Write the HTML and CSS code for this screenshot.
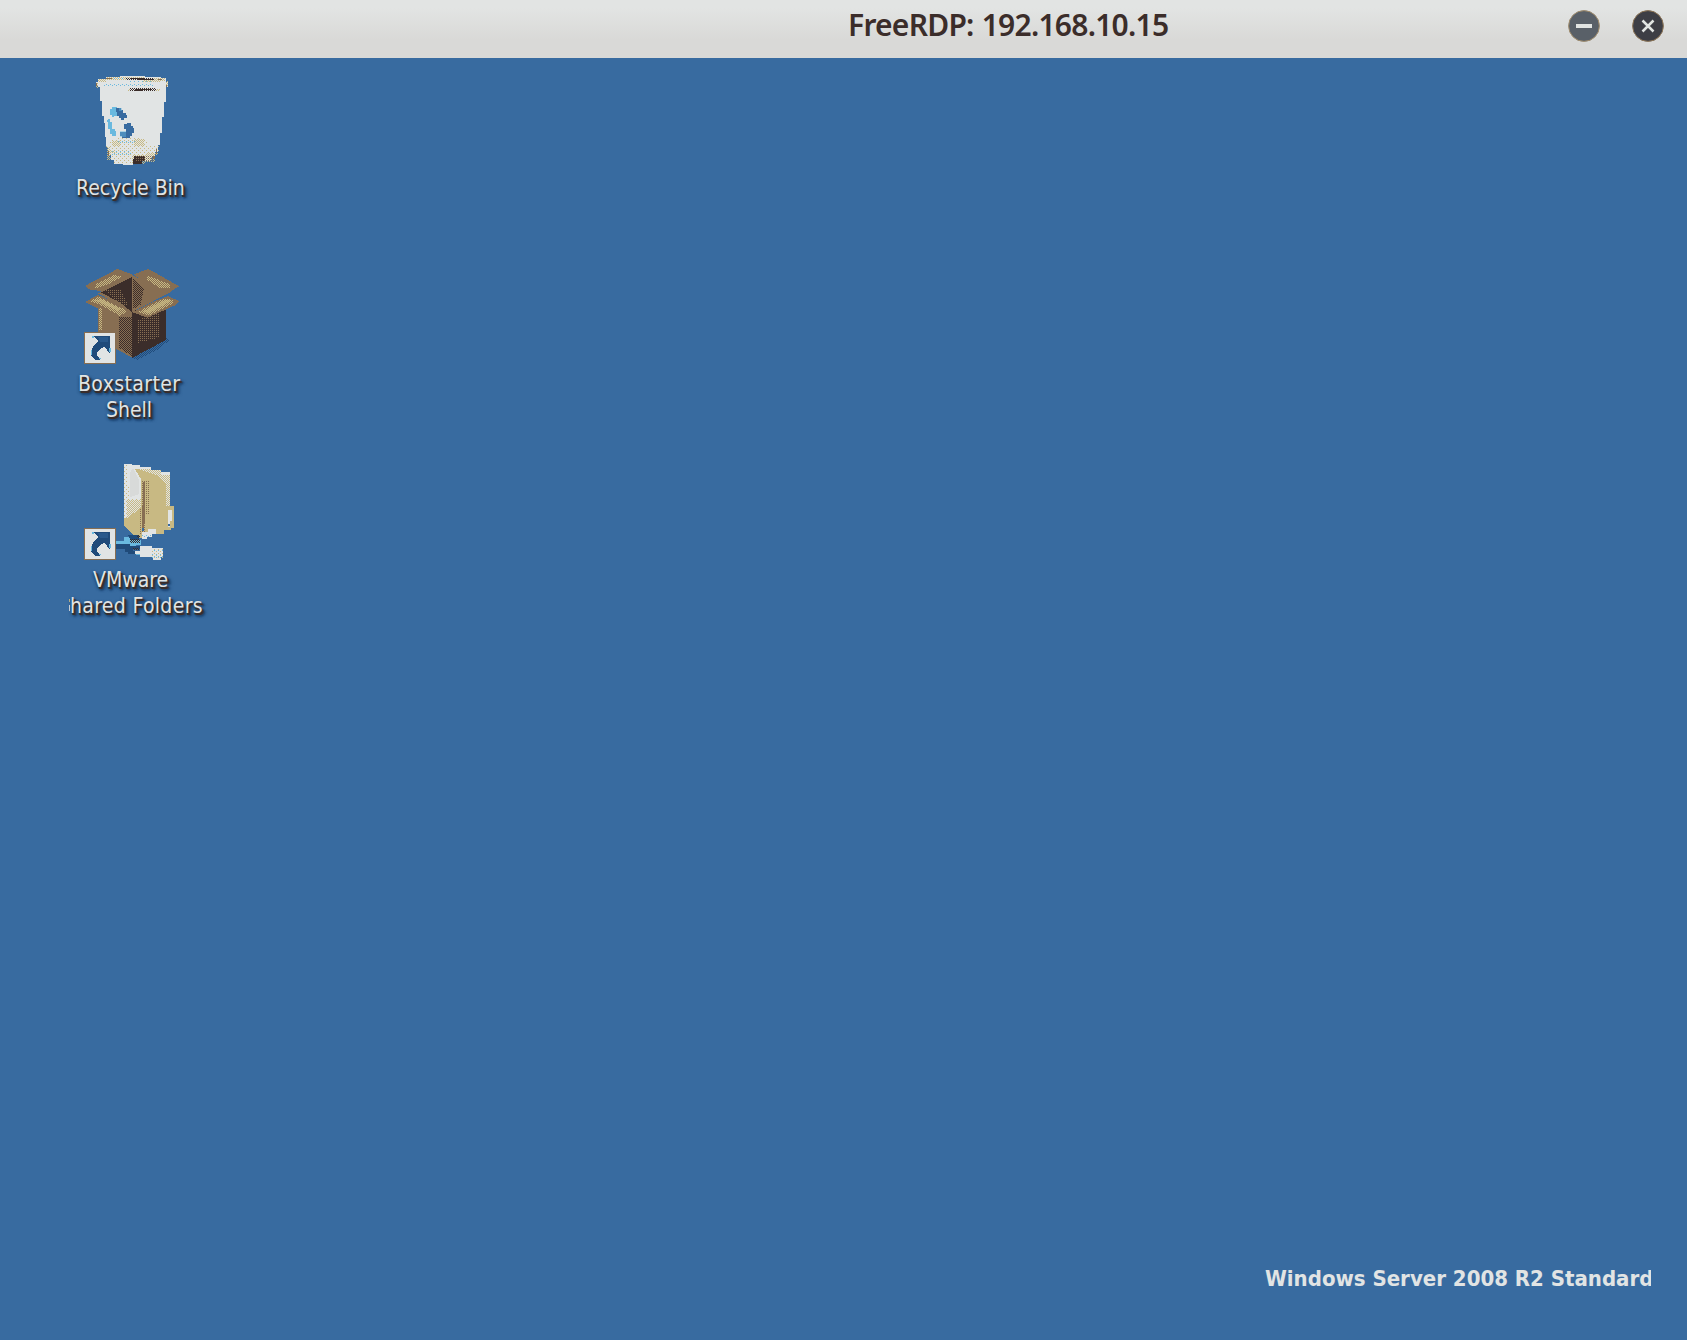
FILE: index.html
```html
<!DOCTYPE html>
<html lang="en">
<head>
<meta charset="utf-8">
<title>FreeRDP: 192.168.10.15</title>
<link rel="stylesheet" href="styles.css">
</head>
<body>
<header class="titlebar">
  <h1 class="title">FreeRDP: 192.168.10.15</h1>
  <div class="controls">
    <svg class="control" viewBox="0 0 32 32"><circle cx="16" cy="16" r="15.4" fill="#596068" stroke="#a18d6d"/><path d="M8 16h16" stroke="#e1e4e2" stroke-width="4"/></svg>
    <svg class="control" viewBox="0 0 32 32"><circle cx="16" cy="16" r="15.4" fill="#3d3e45" stroke="#8d7556"/><path d="M10.5 10.5l11 11m0-11l-11 11" stroke="#e1e4e2" stroke-width="2.5"/></svg>
  </div>
</header>
<main class="desktop">
  <section class="icons">
    <div class="item">
      <svg class="picture" viewBox="0 0 480 336" shape-rendering="crispEdges">
        <defs>
          <pattern id="tan" width="12" height="12" patternUnits="userSpaceOnUse"><path d="M0 0h3v3h-3zM6 6h3v3h-3z" fill="#c8b983"/></pattern>
          <pattern id="brown" width="6" height="6" patternUnits="userSpaceOnUse"><path d="M0 0h3v3h-3z" fill="#876e52"/></pattern>
          <pattern id="dark" width="6" height="6" patternUnits="userSpaceOnUse"><path d="M0 0h3v3h-3zM3 3h3v3h-3z" fill="#3b2d2a"/></pattern>
          <pattern id="gold" width="6" height="6" patternUnits="userSpaceOnUse"><path d="M0 0h3v3h-3zM3 3h3v3h-3z" fill="#c8b983"/></pattern>
          <pattern id="cyan" width="12" height="9" patternUnits="userSpaceOnUse"><path d="M0 0h3v3h-3zM6 6h3v3h-3z" fill="#69b9df"/></pattern>
          <pattern id="blue" width="6" height="6" patternUnits="userSpaceOnUse"><path d="M0 0h3v3h-3zM3 3h3v3h-3z" fill="#204b7a"/></pattern>
          <pattern id="white" width="6" height="6" patternUnits="userSpaceOnUse"><path d="M0 0h3v3h-3zM3 3h3v3h-3z" fill="#e1e4e4"/></pattern>
          <g id="shortcut">
            <path d="M73.5 218.5h93v91h-93z" fill="#e1e4e4" stroke="#876e52" stroke-width="3"/>
            <path d="M99 228h51v51h-3l-6-9-9-9-9 3-9 9-3 9 3 9 6 6v3h-12l-9-6-6-9v-9l3-9 9-15 9-9-6-9-9-3z" fill="#204b7a"/>
            <path d="M114 231h30v15h-24z" fill="#386ba0" opacity=".45"/>
            <path d="M96 228h6v6h-6zM93 270h3v15h-3zM147 264h6v12h-6zM117 294h6v3h-6z" fill="#69b9df"/>
          </g>
        </defs>
        <path d="M108 54h6v-9h24v-6h42v-3h75v3h48v3h15v12h6v15h-6v45h-6v45h-6v48h-6v36h-6v21h-9v15h-12v12h-30v9h-24v3h-30v-3h-27v-12h-9v-15h-9v-24h-6v-30h-3v-42h-3v-21h-6v-45h-6v-42h-6z" fill="#e1e4e4"/>
        <path d="M114 45h24v-6h114v3h51v12h-54v-6h-111v6h-24z" fill="url(#gold)"/>
        <path d="M108 57h6v15h-6zM318 51h6v18h-6zM303 42h12v9h-12z" fill="url(#gold)"/>
        <path d="M108 57h3v9h-3zM318 63h3v6h-3zM138 42h18v3h-18zM294 45h12v3h-12z" fill="#876e52"/>
        <path d="M162 39h54v6h-54zM132 60h150v9h-150zM210 48h72v6h-72z" fill="url(#cyan)"/>
        <path d="M213 42h42v3h24v3h-48v-3h-18zM225 75h48v3h-24v3h-24z" fill="#3b2d2a"/>
        <path d="M204 75h96v6h-96z" fill="url(#gold)"/><path d="M198 42h84v6h-84zM210 72h78v9h-78z" fill="url(#dark)"/>
        <path d="M156 129h15v3h6v9h-6v15h-9v3h-6v-6h-6v-18h6zM144 165h6v9h6v21h9v6h3v15h-12v-6h-6v-15h-6v-21h-3v-6h3z" fill="#69b9df"/>
        <path d="M168 132h15v6h6v9h9v6h3v9h-9v6h-9v-6h-6v-6h-6v-12h-3zM201 177h12v9h6v6h3v15h-6v9h-6v6h-24v-6h-6v-12h18v-9h-6v-15h9z" fill="#386ba0"/>
        <path d="M177 132h9v9h-9zM180 201h18v18h-18z" fill="#69b9df" opacity=".45"/>
        <path d="M168 222h75v6h18v18h36v24h-12v18h-39v12h-84v-15h-15v-27h-9v-15h12v-15h18z" fill="url(#tan)"/>
        <path d="M156 231h24v15h-24zM222 225h30v21h-30zM141 249h9v12h15v6h-15v21h-9zM216 273h45v-6h33v6h-9v21h-30v6h-39z" fill="url(#gold)"/>
        <path d="M174 228h51v12h-51zM153 261h63v12h-63z" fill="url(#cyan)"/>
        <path d="M222 276h33v15h-9v9h-27v-15h3z" fill="#3b2d2a"/><path d="M228 273h54v18h-54z" fill="url(#brown)"/><path d="M288 255h3v15h-3zM144 261h3v15h-3zM279 276h6v9h-6z" fill="#876e52"/>
      </svg>
      <p class="label"><span class="line recycle">Recycle Bin</span></p>
    </div>
    <div class="item">
      <svg class="picture" viewBox="0 0 480 336" shape-rendering="crispEdges">
        <path d="M216 294l45-24 60-38 6 9-27 24-66 34z" fill="url(#blue)"/>
        <path d="M114 140h102v153l-48-27-54-50z" fill="#876e52"/>
        <path d="M216 150l102-3v93l-102 54z" fill="#3b2d2a"/>
        <path d="M114 100L216 45l114 52-114 60z" fill="#876e52"/>
        <path d="M123 98L216 45v111l-40-31z" fill="#3b2d2a"/>
        <path d="M218 50l34 36-10 48-24 15z" fill="url(#dark)"/>
        <path d="M76 77L157 35l15-8 43 15v9l-86 43-43-6z" fill="#876e52"/>
        <path d="M221 43l43-16 18 9 75 43-26 16-48-4z" fill="#876e52"/>
        <path d="M74 126l41-21 82 36 12 15-24 16h-15z" fill="#876e52"/>
        <path d="M217 157l61-31 46-18 33 15-12 13-82 37z" fill="#876e52"/>
        <path d="M107 72l55-27 26 5-48 25-34 10zM264 47l66 26v12h-28l-42-26zM90 124l24-14 83 40v9l-19 8-53-30zM235 155l75-39 30 4v11l-75 36z" fill="url(#gold)"/>
        <path d="M104 121l20-4 57 29-6 7-56-26zM249 154l68-35 18 3-70 38z" fill="#c8b983" opacity=".65"/>
        <path d="M117 145h9v66h-9z" fill="url(#gold)"/>
        <path d="M176 170h39v118l-39-25z" fill="url(#dark)"/>
        <path d="M234 179l66-24v78l-66 15z" fill="url(#brown)"/>
        <path d="M282 93h21v15h-21zM135 88h48l21 48h-27z" fill="url(#brown)"/>
        <use href="#shortcut"/>
      </svg>
      <p class="label"><span class="line box">Boxstarter</span><span class="line shell">Shell</span></p>
    </div>
    <div class="item">
      <svg class="picture" viewBox="0 0 480 336" shape-rendering="crispEdges">
        <g transform="translate(0 -3)">
          <path d="M192 27h24v6h24v6h33v6h30v6h27v102h12v66h-9v6h-21v12h-48l-15 12h-18l-39-36z" fill="#c8b983"/>
          <path d="M192 27h24l27 45v87l-42 30h-9z" fill="#e1e4e4"/>
          <path d="M210 54l9-15 18 36v42l-27 9z" fill="#d8dad9"/>
          <path d="M216 33h24v6h33v6h30v6h27v102h-12V90l-24-27-51-18z" fill="url(#white)"/>
          <path d="M216 30h24v6h33v6h-57zM303 51h27v9h-27z" fill="#e1e4e4"/>
          <path d="M192 27h9v69h9v36h33v30l-42 33h-9z" fill="url(#tan)"/>
          <path d="M201 135h42v24l-42 30z" fill="url(#gold)"/>
          <path d="M249 81h6v105l-3 36h-6z" fill="#876e52"/><path d="M246 78h21v102h-12v60h-15v-78h6z" fill="url(#brown)"/>
          <path d="M324 165h12v33h-6v18h-6zM246 231h18v-9h24v15h-12v9h-15v6h-15z" fill="#e1e4e4"/>
          <path d="M168 258h24v-12h18v-6h24v15h9v15h-15v9h-60zM204 291h96v9h-66z" fill="#69b9df"/>
          <path d="M168 267h42v6h33v9h-24v9h-24v-9h-27zM204 240h33v15h-24zM204 288h27v9h-27z" fill="#204b7a"/>
          <path d="M210 252h30v12h-30zM231 240h9v9h-9zM219 279h18v6h-18z" fill="url(#dark)"/>
          <path d="M240 273h36v6h33v27h-6v9h-24v-9h-39v-9h-15v-9h15z" fill="#e1e4e4"/><path d="M276 282h36v30h-36zM246 240h27v9h-27z" fill="url(#cyan)"/>
          <path d="M276 282h33v27h-33z" fill="url(#tan)"/>
          <path d="M245 220h6v9h-6zM324 207h6v6h-6z" fill="#386ba0"/>
          <use href="#shortcut" y="3"/>
        </g>
      </svg>
      <p class="label"><span class="line vmware">VMware</span><span class="line shared">hared Folders</span></p>
    </div>
  </section>
  <footer class="edition">Windows Server 2008 R2 Standard</footer>
</main>
</body>
</html>
```
FILE: styles.css
```css
* { box-sizing: border-box; }
body {
  margin: 0;
  height: 1340px;
  display: flex;
  flex-direction: column;
  overflow: hidden;
  background: #386ba0;
}
.titlebar {
  height: 58px;
  flex: none;
  display: grid;
  grid-template-columns: 848px 1fr auto;
  padding: 0 23px 0 0;
  background: linear-gradient(#e2e4e3 0 8px, #d9d9d7 40px);
}
.title {
  grid-column: 2;
  margin: 0;
  font: 600 30px/50px "Noto Sans", sans-serif;
  letter-spacing: -0.75px;
  word-spacing: 1px;
  white-space: nowrap;
  color: #3b2d2a;
}
.controls { display: flex; gap: 32px; padding-top: 10px; }
.control { width: 32px; height: 32px; }
.desktop {
  flex: 1;
  display: flex;
  flex-direction: column;
  justify-content: space-between;
}
.icons {
  display: grid;
  grid-auto-rows: 196px;
  padding: 6px 0 0 60px;
}
.item { width: 160px; }
.picture { display: block; width: 160px; height: 112px; }
.label {
  margin: -1px 0 0;
  font: 21px/26px "DejaVu Sans Condensed", "DejaVu Sans", sans-serif;
  font-stretch: condensed;
  color: #e1e4e4;
  text-shadow: 1px 2px 0 #3b2d2a, 2px 2px 1px #3b2d2a, 3px 3px 1px #204b7a, 2px 4px 2px #204b7a, 4px 3px 3px #204b7a, 0 1px 3px #204b7a, 0 2px 3px #204b7a;
}
.line { display: block; white-space: nowrap; }
.recycle { padding-left: 16px; }
.box { padding-left: 18px; letter-spacing: .4px; }
.shell { padding-left: 46px; }
.vmware { padding-left: 33px; }
/* The first letter is cut off at the cell edge; a sliver of it remains. */
.shared {
  margin-left: 9px;
  padding-left: 1px;
  letter-spacing: .33px;
  background: linear-gradient(#c8b983, #c8b983) 0 6px / 1px 3px no-repeat, linear-gradient(#e1e4e4, #e1e4e4) 0 12px / 1px 6px no-repeat;
}
.edition {
  width: 386px;
  margin: 0 36px 44px auto;
  overflow: hidden;
  white-space: nowrap;
  font: bold 22px/34px "DejaVu Sans Condensed", "DejaVu Sans", sans-serif;
  font-stretch: condensed;
  color: #e1e4e4;
}
```
